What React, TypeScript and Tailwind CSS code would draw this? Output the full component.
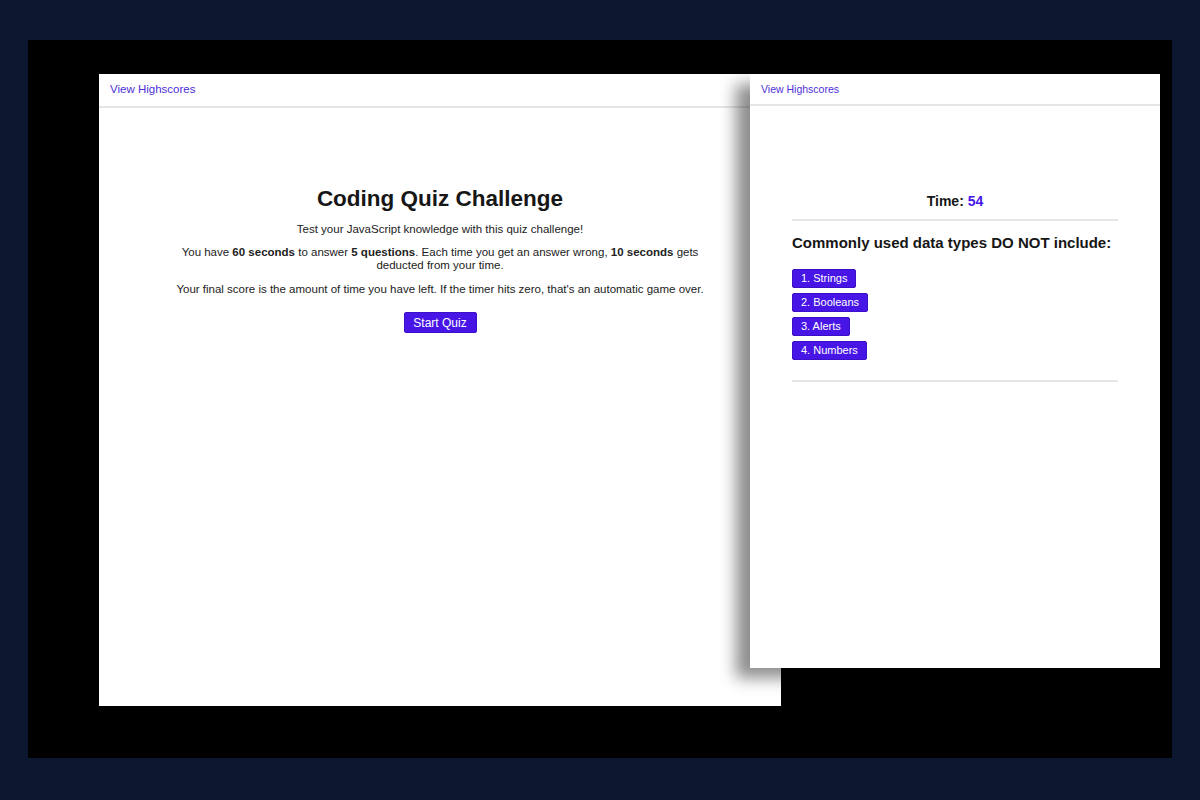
import type { ReactNode } from "react";

const FONT = "font-['Liberation_Sans',Arial,sans-serif]";

const answers = ["1. Strings", "2. Booleans", "3. Alerts", "4. Numbers"];

function Header({ small }: { small?: boolean }) {
  return (
    <div
      className={
        small
          ? "h-[32px] flex items-center pl-[11px] border-b-2 border-[#e6e6e6]"
          : "h-[34px] flex items-center pl-[11px] border-b-2 border-[#e6e6e6]"
      }
    >
      <a
        className={
          small
            ? "text-[10.5px] text-[#4d2fd6] leading-none"
            : "text-[11.5px] text-[#4d2fd6] leading-none"
        }
      >
        View Highscores
      </a>
    </div>
  );
}

function PurpleButton({ children, className }: { children: ReactNode; className?: string }) {
  return (
    <button
      className={
        "bg-[#4716e6] text-white rounded-[2px] border border-[#3a10c8] leading-none " +
        (className ?? "")
      }
    >
      {children}
    </button>
  );
}

function StartScreen() {
  return (
    <div className="w-[682px] h-[632px] bg-white shrink-0">
      <Header />
      <div className="flex flex-col items-center text-center text-[#222]">
        <h1 className="mt-[78px] text-[22.5px] leading-[26px] font-bold text-[#161616]">
          Coding Quiz Challenge
        </h1>
        <p className="mt-[10px] text-[11.5px] leading-[14px]">
          Test your JavaScript knowledge with this quiz challenge!
        </p>
        <p className="mt-[10px] w-[520px] text-[11.5px] leading-[13px]">
          You have <b>60 seconds</b> to answer <b>5 questions</b>. Each time you get an answer
          wrong, <b>10 seconds</b> gets deducted from your time.
        </p>
        <p className="mt-[10px] text-[11.5px] leading-[14px]">
          Your final score is the amount of time you have left. If the timer hits zero,
          that's an automatic game over.
        </p>
        <PurpleButton className="mt-[16px] w-[73px] h-[21px] text-[12px]">Start Quiz</PurpleButton>
      </div>
    </div>
  );
}

function QuestionScreen() {
  return (
    <div className="relative z-10 -ml-[31px] w-[410px] h-[594px] bg-white shrink-0 shadow-[-14px_10px_15px_rgba(0,0,0,0.45)]">
      <Header small />
      <div className="px-[42px]">
        <div className="mt-[87px] text-center text-[14px] leading-[16px] font-bold text-[#161616]">
          Time: <span className="text-[#4716e6]">54</span>
        </div>
        <div className="mt-[10px] h-[2px] bg-[#e6e6e6]" />
        <div className="mt-[13px] text-[15px] leading-[18px] font-bold text-[#161616]">
          Commonly used data types DO NOT include:
        </div>
        <div className="mt-[17px] flex flex-col items-start gap-[5px]">
          {answers.map((a) => (
            <PurpleButton key={a} className="h-[19px] px-[8px] text-[11px]">
              {a}
            </PurpleButton>
          ))}
        </div>
        <div className="mt-[20px] h-[2px] bg-[#e6e6e6]" />
      </div>
    </div>
  );
}

export default function App() {
  return (
    <div className={"w-[1200px] h-[800px] bg-[#0d1830] pt-[40px] pl-[28px] " + FONT}>
      <div className="w-[1144px] h-[718px] bg-black pt-[34px] pl-[71px] flex items-start">
        <StartScreen />
        <QuestionScreen />
      </div>
    </div>
  );
}
